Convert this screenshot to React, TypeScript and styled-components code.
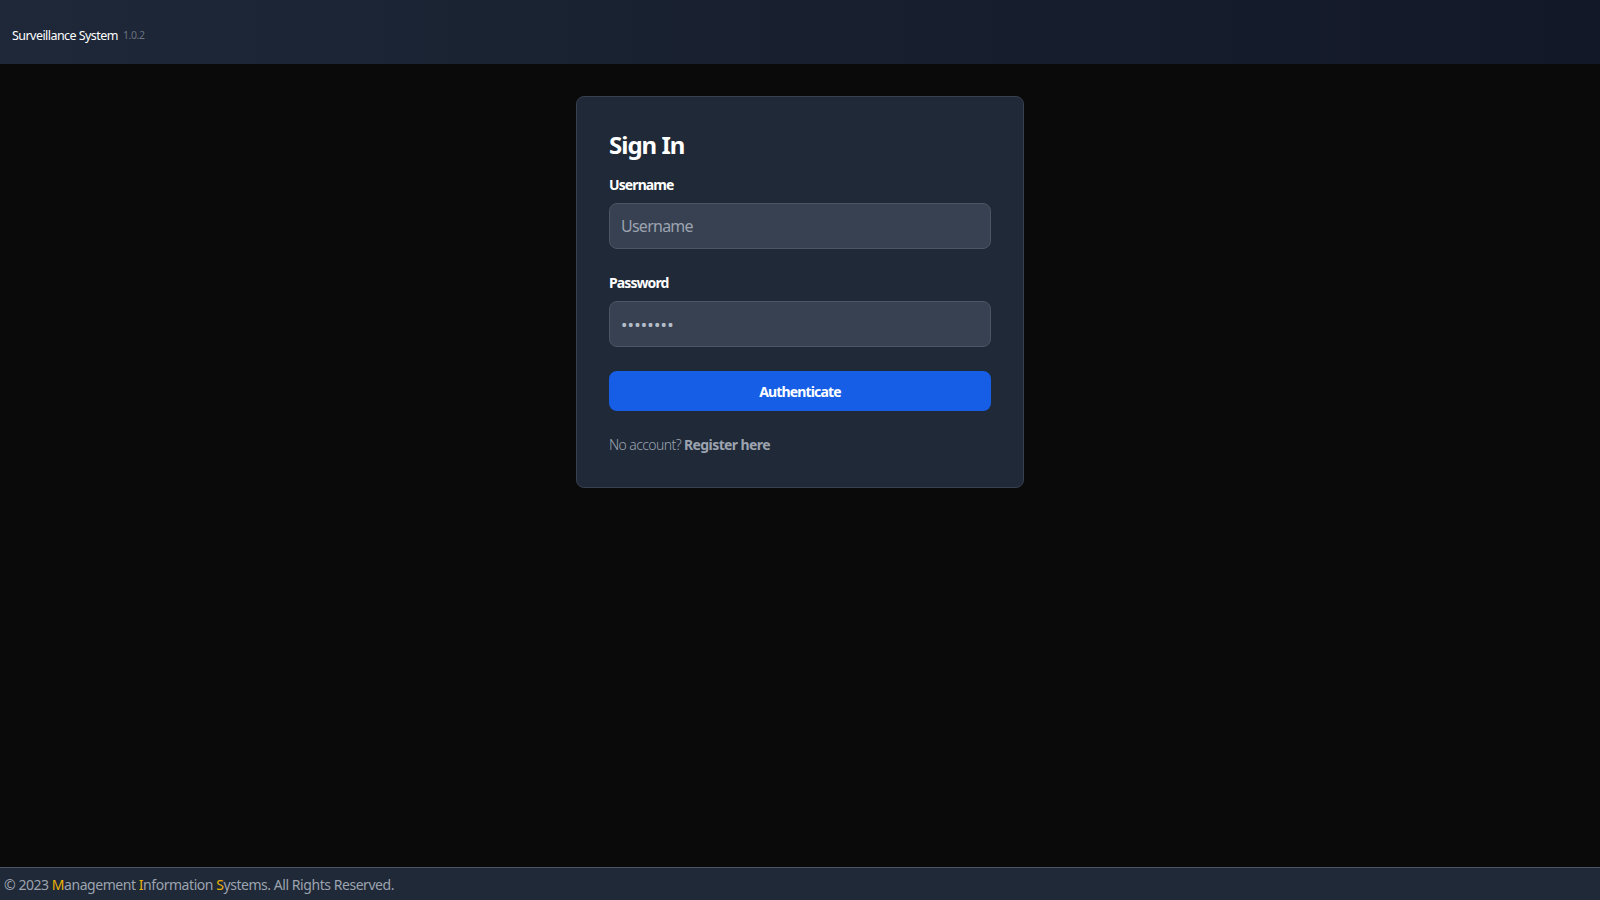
import * as React from 'react';
import styled, { createGlobalStyle } from 'styled-components';

const GlobalStyle = createGlobalStyle`
	* {
		box-sizing: border-box;
	}
	html,
	body {
		margin: 0;
		padding: 0;
		background: #0a0a0a;
		font-family: 'Noto Sans', 'Open Sans', sans-serif;
	}
`;

const Page = styled.div`
	display: flex;
	flex-direction: column;
	min-height: 100vh;
`;

const Header = styled.header`
	height: 64px;
	display: flex;
	align-items: center;
	gap: 5px;
	padding: 6px 12px 0 12px;
	background: linear-gradient(to right, #1e2838, #121827);
`;

const Brand = styled.span`
	color: #ffffff;
	font-size: 12.5px;
	letter-spacing: -0.55px;
`;

const Version = styled.span`
	color: #6b7280;
	font-size: 10.5px;
	letter-spacing: -0.4px;
`;

const Main = styled.main`
	flex: 1;
	display: flex;
	justify-content: center;
	align-items: flex-start;
	padding-top: 32px;
`;

const Card = styled.section`
	width: 448px;
	padding: 32px;
	background: #1f2937;
	border: 1px solid #374151;
	border-radius: 8px;
	display: flex;
	flex-direction: column;
`;

const Title = styled.h2`
	margin: 0 0 14px 0;
	color: #ffffff;
	font-size: 24px;
	line-height: 32px;
	font-weight: 700;
	letter-spacing: -1px;
`;

const Field = styled.div`
	display: flex;
	flex-direction: column;
	margin-bottom: 24px;
`;

const Label = styled.label`
	color: #ffffff;
	font-size: 14px;
	line-height: 20px;
	font-weight: 700;
	margin-bottom: 8px;
	letter-spacing: -0.9px;
`;

const Input = styled.input`
	height: 46px;
	padding: 0 11px;
	background: #374151;
	border: 1px solid #4b5563;
	border-radius: 8px;
	color: #b4bcc8;
	font-family: inherit;
	font-size: 16px;
	letter-spacing: -0.75px;
	outline: none;
	&::placeholder {
		color: #9ca3af;
	}
	&[type='password'] {
		font-size: 17px;
		letter-spacing: 0.2px;
	}
`;

const Button = styled.button`
	height: 40px;
	border: none;
	border-radius: 8px;
	background: #165ee6;
	color: #ffffff;
	font-family: inherit;
	font-size: 14px;
	font-weight: 700;
	letter-spacing: -0.85px;
	cursor: pointer;
	margin-bottom: 24px;
`;

const Note = styled.p`
	margin: 0;
	font-size: 14px;
	line-height: 20px;
	color: #9ca3af;
	font-weight: 300;
	letter-spacing: -0.6px;
`;

const NoteLink = styled.a`
	color: #9ca3af;
	font-weight: 700;
	text-decoration: none;
`;

const Footer = styled.footer`
	height: 33px;
	display: flex;
	align-items: center;
	padding: 0 4px;
	background: #1f2937;
	border-top: 1px solid #4b5563;
	color: #9ca3af;
	font-size: 14px;
	letter-spacing: -0.45px;
`;

const Initial = styled.span`
	color: #eab308;
`;

export default function App(): JSX.Element {
	return (
		<Page>
			<GlobalStyle />
			<Header>
				<Brand>Surveillance System</Brand>
				<Version>1.0.2</Version>
			</Header>
			<Main>
				<Card>
					<Title>Sign In</Title>
					<Field>
						<Label htmlFor="username">Username</Label>
						<Input id="username" type="text" placeholder="Username" />
					</Field>
					<Field>
						<Label htmlFor="password">Password</Label>
						<Input id="password" type="password" defaultValue="password" />
					</Field>
					<Button type="button">Authenticate</Button>
					<Note>
						No account? <NoteLink href="#">Register here</NoteLink>
					</Note>
				</Card>
			</Main>
			<Footer>
				<span>
					© 2023 <Initial>M</Initial>anagement <Initial>I</Initial>nformation{' '}
					<Initial>S</Initial>ystems. All Rights Reserved.
				</span>
			</Footer>
		</Page>
	);
}
